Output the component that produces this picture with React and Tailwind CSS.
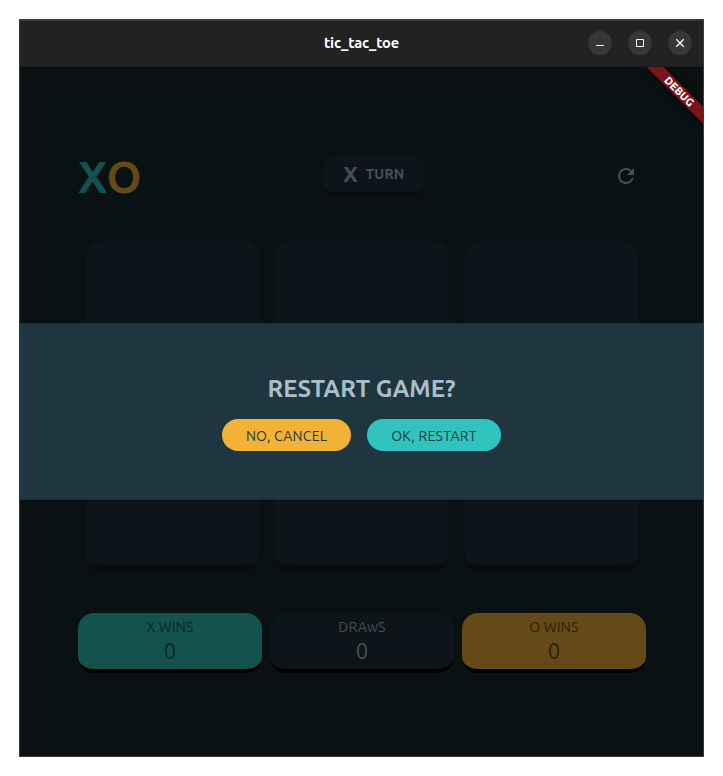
const fontUI = "font-['Ubuntu','Noto_Sans',sans-serif]";

function WindowButton({ label, children }) {
  return (
    <button aria-label={label} className="flex size-6 items-center justify-center rounded-full bg-[#373737]">
      <svg width="24" height="24" viewBox="0 0 24 24" fill="none" stroke="#fff">
        {children}
      </svg>
    </button>
  );
}

function TitleBar() {
  return (
    <header className="grid h-[47px] shrink-0 grid-cols-[1fr_auto_1fr] items-center border-t border-b border-t-[#3b3b3b] border-b-[#1b1b1b] bg-[#222222]">
      <span />
      <h1 className="text-[14.67px] leading-none font-bold tracking-[-0.15px] text-white">tic_tac_toe</h1>
      <div className="-mt-0.5 flex justify-end gap-4 pr-[11px]">
        <WindowButton label="Minimize">
          <path d="M8 14.5h8" />
        </WindowButton>
        <WindowButton label="Maximize">
          <path d="M8.5 8.5h7v7h-7z" />
        </WindowButton>
        <WindowButton label="Close">
          <path d="M8.3 8.3l7.4 7.4M15.7 8.3l-7.4 7.4" strokeWidth="1.3" />
        </WindowButton>
      </div>
    </header>
  );
}

function ScoreCard({ label, value, tone }) {
  return (
    <div className={`flex h-[60px] flex-col items-center rounded-2xl border-b-4 border-black ${tone}`}>
      <span className="mt-[5px] text-[14px] leading-[18px] tracking-[0.25px]">{label}</span>
      <span className="mt-[2px] text-[22px] leading-[26px]">{value}</span>
    </div>
  );
}

export default function App() {
  return (
    <div className={`h-[776px] w-[723px] overflow-hidden bg-white pt-[19px] pl-[19px] ${fontUI}`}>
      <div className="flex h-[738px] w-[685px] flex-col border border-[#3b3b3b] bg-[#091113]">
        <TitleBar />
        <main className="relative flex-1 overflow-hidden">
          <div className="flex flex-col pt-[88px] pr-[57px] pl-[58px]">
            <div className="grid h-10 grid-cols-3 items-start">
              <div className="mt-[-2px] flex text-[44.5px] leading-[48px] font-bold">
                <span className="text-[#14524e]">X</span>
                <span className="-ml-px text-[#654a17]">O</span>
              </div>
              <div className="mt-px ml-[57px] flex h-10 w-[100px] items-center justify-center gap-2 rounded-[10px] border-b-4 border-[#080d10] bg-[#0d151b] pr-px font-bold text-[#464f55]">
                <span className="text-[22px] leading-none">X</span>
                <span className="text-[14px] leading-none tracking-[0.25px]">TURN</span>
              </div>
              <button aria-label="Restart" className="mt-[9px] mr-[8px] justify-self-end text-[#464f53]">
                <svg width="24" height="24" viewBox="0 0 24 24" fill="currentColor">
                  <path d="M17.65 6.35A7.96 7.96 0 0 0 12 4a8 8 0 1 0 7.73 10h-2.08A6 6 0 1 1 12 6c1.66 0 3.14.69 4.22 1.78L13 11h7V4z" />
                </svg>
              </button>
            </div>

            <div className="mx-2 mt-[46px] grid h-[332px] grid-cols-3 grid-rows-3 gap-4">
              {Array.from({ length: 9 }, (_, i) => (
                <div key={i} className="rounded-2xl border-b-8 border-[#080d10] bg-[#0d151b]" />
              ))}
            </div>

            <div className="mt-10 grid grid-cols-3 gap-2">
              <ScoreCard label="X WINS" value="0" tone="bg-[#14524e] text-[#092824]" />
              <ScoreCard label="DRAwS" value="0" tone="bg-[#0d151b] text-[#464f55]" />
              <ScoreCard label="O WINS" value="0" tone="bg-[#654a17] text-[#2b210b]" />
            </div>
          </div>

          <div role="dialog" className="absolute top-[256px] left-0 flex h-[177px] w-full flex-col items-center border-y border-[#1a2c34] bg-[#1f3640] pt-[50px]">
            <h2 className="text-[24px] leading-[30px] font-semibold text-[#a8bfc9]">RESTART GAME?</h2>
            <div className="mt-[15px] flex gap-4">
              <button className="h-8 w-[129px] rounded-full bg-[#f2b137] pt-0.5 text-[14px] tracking-[0.25px] text-[#183b3b]">NO, CANCEL</button>
              <button className="h-8 w-[134px] rounded-full bg-[#31c3bd] pt-0.5 text-[14px] tracking-[0.25px] text-[#183b3b]">OK, RESTART</button>
            </div>
          </div>

          <div className="absolute top-[18px] right-[-26px] flex h-3 w-[100px] rotate-45 items-center justify-center bg-[#771719] pl-px text-[10.8px] leading-none font-black text-white shadow-[0_0_6px_rgba(0,0,0,0.5)]">
            DEBUG
          </div>
        </main>
      </div>
    </div>
  );
}
